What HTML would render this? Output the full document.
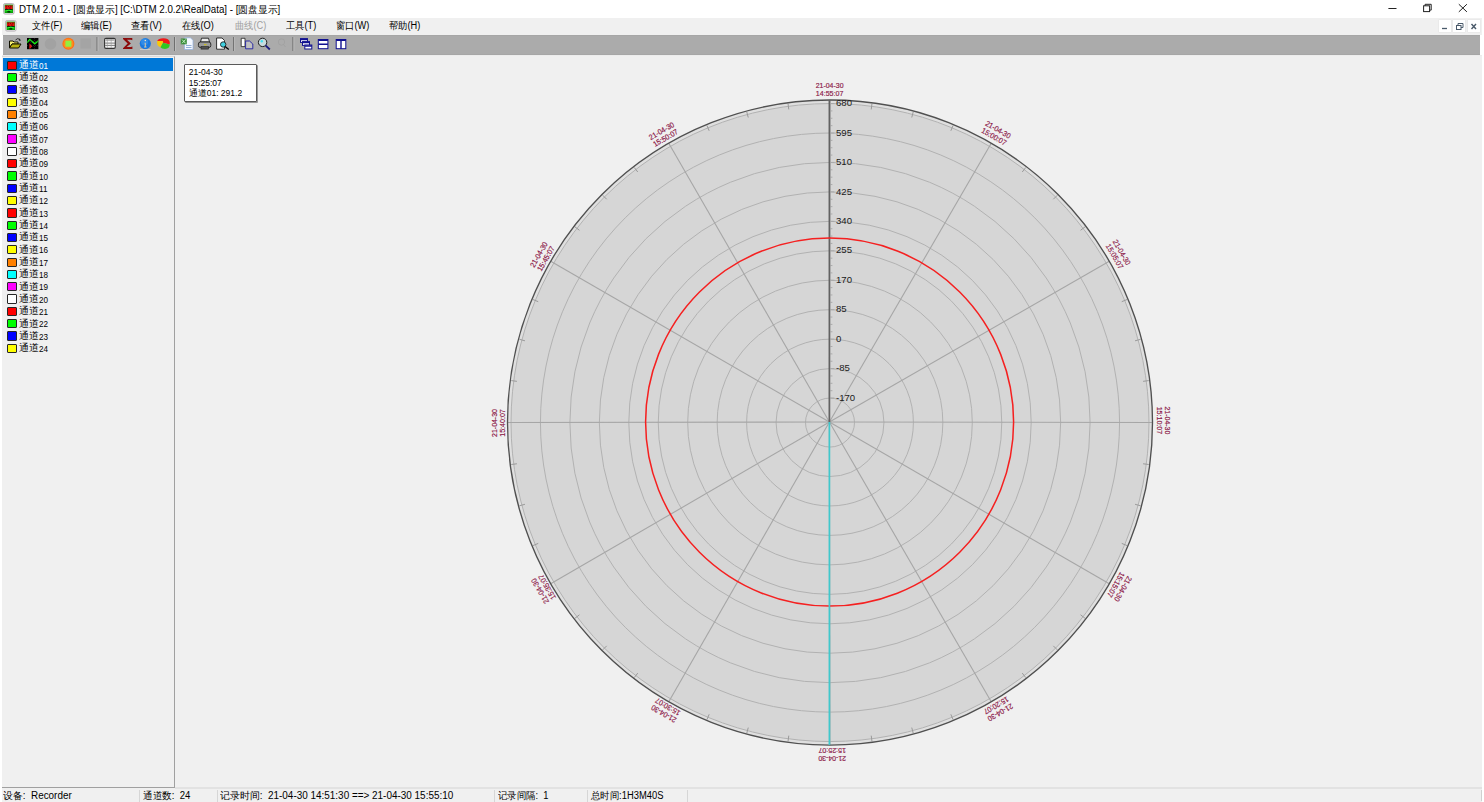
<!DOCTYPE html><html><head><meta charset="utf-8"><style>
html,body{margin:0;padding:0;width:1484px;height:802px;overflow:hidden;background:#fff;font-family:"Liberation Sans",sans-serif;}
.abs{position:absolute;}
.t{position:absolute;white-space:nowrap;line-height:1;color:#000;}
</style></head><body>

<div class="abs" style="left:2px;top:18px;width:1480px;height:17px;background:#f0f0f0"></div>
<div class="abs" style="left:3px;top:35px;width:1477px;height:20px;background:#ababab"></div>
<div class="abs" style="left:2px;top:55px;width:1480px;height:747px;background:#f0f0f0"></div>
<div class="abs" style="left:2px;top:55px;width:1480px;height:1px;background:#ececec"></div>
<div class="abs" style="left:3px;top:35px;width:1477px;height:1px;background:#a6a6a6"></div>
<div class="abs" style="left:3px;top:54px;width:1477px;height:1px;background:#a6a6a6"></div>
<div class="abs" style="left:2px;top:56px;width:172px;height:730px;border-top:1px solid #dadada;border-right:1px solid #a0a0a0;border-bottom:1px solid #a0a0a0;background:#f0f0f0"></div>
<div class="abs" style="left:175px;top:787px;width:1307px;height:2px;background:#e2e2e2"></div>
<svg class="abs" style="left:3px;top:3.3px" width="12" height="12" viewBox="0 0 12 12"><rect x="0.5" y="0.5" width="10.6" height="10.6" rx="1.6" fill="#e8e4e8" stroke="#b4aeb4" stroke-width="0.9"/><rect x="1.6" y="1.6" width="8.4" height="8.4" fill="#08a008"/><rect x="2" y="2.4" width="7.6" height="3.6" fill="#e81010"/><path d="M2.5 3.2 h1.5 M5 3.6 h1 M7 3.2 h1.6 M3 5.2 h1 M6 5 h2" stroke="#400000" stroke-width="0.6"/><rect x="2" y="6" width="7.6" height="0.9" fill="#102010"/><path d="M2.3 8 Q5.8 6.3 9.3 8" stroke="#40ff40" stroke-width="0.9" fill="none"/><rect x="4.5" y="8.4" width="2.6" height="1" fill="#000"/></svg>
<div class="t" style="left:19px;top:5px;font-size:10px;color:#000;transform:scaleX(0.975);transform-origin:0 0">DTM 2.0.1 - [圆盘显示] [C:\DTM 2.0.2\RealData] - [圆盘显示]</div>
<svg class="abs" style="left:1380px;top:0px" width="104" height="18" viewBox="0 0 104 18"><line x1="8.4" y1="8.5" x2="16.5" y2="8.5" stroke="#222" stroke-width="1"/><rect x="43.6" y="5.8" width="6" height="5.8" fill="none" stroke="#222" stroke-width="1"/><path d="M45.1 5.8 V4.3 H51.2 V10.1 H49.6" fill="none" stroke="#222" stroke-width="1"/><path d="M78.8 4.2 L86.9 11.9 M86.9 4.2 L78.8 11.9" stroke="#222" stroke-width="1"/></svg>
<svg class="abs" style="left:4.5px;top:19.6px" width="12" height="12" viewBox="0 0 12 12"><rect x="0.5" y="0.5" width="10.6" height="10.6" rx="1.6" fill="#e8e4e8" stroke="#b4aeb4" stroke-width="0.9"/><rect x="1.6" y="1.6" width="8.4" height="8.4" fill="#08a008"/><rect x="2" y="2.4" width="7.6" height="3.6" fill="#e81010"/><path d="M2.5 3.2 h1.5 M5 3.6 h1 M7 3.2 h1.6 M3 5.2 h1 M6 5 h2" stroke="#400000" stroke-width="0.6"/><rect x="2" y="6" width="7.6" height="0.9" fill="#102010"/><path d="M2.3 8 Q5.8 6.3 9.3 8" stroke="#40ff40" stroke-width="0.9" fill="none"/><rect x="4.5" y="8.4" width="2.6" height="1" fill="#000"/></svg>
<div class="t" style="left:31.7px;top:20.8px;font-size:10px;color:#000;transform:scaleX(0.925);transform-origin:0 0">文件(F)</div>
<div class="t" style="left:81px;top:20.8px;font-size:10px;color:#000;transform:scaleX(0.925);transform-origin:0 0">编辑(E)</div>
<div class="t" style="left:131px;top:20.8px;font-size:10px;color:#000;transform:scaleX(0.925);transform-origin:0 0">查看(V)</div>
<div class="t" style="left:182px;top:20.8px;font-size:10px;color:#000;transform:scaleX(0.925);transform-origin:0 0">在线(O)</div>
<div class="t" style="left:235px;top:20.8px;font-size:10px;color:#a0a0a0;transform:scaleX(0.925);transform-origin:0 0">曲线(C)</div>
<div class="t" style="left:285.5px;top:20.8px;font-size:10px;color:#000;transform:scaleX(0.925);transform-origin:0 0">工具(T)</div>
<div class="t" style="left:336px;top:20.8px;font-size:10px;color:#000;transform:scaleX(0.925);transform-origin:0 0">窗口(W)</div>
<div class="t" style="left:389px;top:20.8px;font-size:10px;color:#000;transform:scaleX(0.925);transform-origin:0 0">帮助(H)</div>
<div class="abs" style="left:1439px;top:20px;width:12px;height:12px;background:#fff;box-shadow:0 0 0 0.5px #e4e4e4"></div>
<div class="abs" style="left:1453px;top:20px;width:12px;height:12px;background:#fff;box-shadow:0 0 0 0.5px #e4e4e4"></div>
<div class="abs" style="left:1468px;top:20px;width:12px;height:12px;background:#fff;box-shadow:0 0 0 0.5px #e4e4e4"></div>
<svg class="abs" style="left:1439px;top:20px" width="42" height="13" viewBox="0 0 42 13"><line x1="3" y1="8.5" x2="8" y2="8.5" stroke="#4a5a6a" stroke-width="1.3"/><rect x="17.5" y="5.5" width="4.5" height="4" fill="none" stroke="#4a5a6a" stroke-width="1"/><path d="M19 5.5 V3.5 H24 V7.5 H22" fill="none" stroke="#4a5a6a" stroke-width="1"/><path d="M32.5 4 L37 9 M37 4 L32.5 9" stroke="#4a5a6a" stroke-width="1.4"/></svg>
<svg class="abs" style="left:0;top:0" width="360" height="56" viewBox="0 0 360 56"><line x1="97" y1="37" x2="97" y2="51" stroke="#6e6e6e" stroke-width="1"/><line x1="98" y1="37" x2="98" y2="51" stroke="#c8c8c8" stroke-width="0.6"/><line x1="174.5" y1="37" x2="174.5" y2="51" stroke="#6e6e6e" stroke-width="1"/><line x1="175.5" y1="37" x2="175.5" y2="51" stroke="#c8c8c8" stroke-width="0.6"/><line x1="233.6" y1="37" x2="233.6" y2="51" stroke="#6e6e6e" stroke-width="1"/><line x1="234.6" y1="37" x2="234.6" y2="51" stroke="#c8c8c8" stroke-width="0.6"/><line x1="292.9" y1="37" x2="292.9" y2="51" stroke="#6e6e6e" stroke-width="1"/><line x1="293.9" y1="37" x2="293.9" y2="51" stroke="#c8c8c8" stroke-width="0.6"/><path d="M9.5 41 H13 L14 42 H18 V44 H12 L9.5 48 Z" fill="#f8f070" stroke="#101000" stroke-width="1"/><path d="M9.5 48 L12 44 H21 L18.5 48 Z" fill="#b8b010" stroke="#101000" stroke-width="1"/><path d="M15.5 40 Q17.5 37.5 20 39.5" fill="none" stroke="#202020" stroke-width="0.9"/><path d="M19.5 38.5 L21 40.5 L18.8 40.8 Z" fill="#202020"/><rect x="27" y="38" width="11.4" height="11.2" fill="#000"/><path d="M27.2 42.5 L29.7 39.4 L34.8 43.8 L38.4 40.8" fill="none" stroke="#10f010" stroke-width="1.3"/><path d="M29.4 43.2 L32.4 46.2 L29.4 49 Z" fill="#ff1010"/><path d="M30.8 38 V49 M34.5 38 V49 M27 41.5 H38.4 M27 45.5 H38.4" stroke="#404040" stroke-width="0.5" stroke-dasharray="1 1"/><circle cx="50.5" cy="44" r="5.8" fill="#a2a2a2"/><circle cx="68.4" cy="43.7" r="6" fill="#ff7010"/><circle cx="68.4" cy="43.7" r="5" fill="#ff8a20"/><rect x="65.4" y="40.7" width="6" height="6" fill="#90f040"/><rect x="80.5" y="38.5" width="10.5" height="10" fill="#a4a4a4"/><rect x="104.6" y="38.4" width="10.7" height="10" rx="1.3" fill="#f8f8f8" stroke="#343434" stroke-width="1.1"/><rect x="105.3" y="39" width="9.3" height="2" fill="#b8b8b8"/><path d="M105.2 43.1 H115 M105.2 45.4 H115" stroke="#505050" stroke-width="0.75"/><path d="M107.3 39 V48 M111.2 39 V48" stroke="#9a9a9a" stroke-width="0.6"/><path d="M123 38 H132.3 V40.3 L131 39.8 H127 L130.9 43.6 L126.6 47.1 H131 L132.4 46.4 V49 H123 V48.2 L127.7 43.6 L123 38.9 Z" fill="#8c0a0a"/><circle cx="145.3" cy="43.6" r="5.6" fill="#1878e0"/><circle cx="144.5" cy="42" r="3.5" fill="#4aa0f0" opacity="0.5"/><circle cx="145.3" cy="40.5" r="0.75" fill="#f0e8d0"/><path d="M144.5 42.8 H145.8 V46.6 H146.5 V47.4 H144.1 V46.6 H144.8 V43.5 H144.5 Z" fill="#d8c8a8"/><line x1="140" y1="49.5" x2="150.5" y2="49.5" stroke="#e0e0e0" stroke-width="0.6"/><path d="M157.2 41 Q158.5 38.3 163.2 38.2 Q169.3 38.3 169.8 42 L169.7 44.5 L163 42.8 L162.8 41 Z" fill="#f01818"/><path d="M157.2 41 H162.8 L163 42.8 L160.5 47.3 Q157.3 46.2 157.1 43 Z" fill="#f8c808"/><path d="M163 42.8 L169.7 44.5 Q169.8 48.6 165 49 Q161.6 49 160.5 47.3 Z" fill="#30c820"/><path d="M184.5 37.8 H190.5 L193 40.3 V49.5 H184.5 Z" fill="#f4f8ff" stroke="#90b0e0" stroke-width="0.7"/><rect x="180.8" y="38.5" width="6" height="5.8" fill="#3a8a3a"/><path d="M182 39.5 L185.6 43.3 M185.6 39.5 L182 43.3" stroke="#d0ffd0" stroke-width="0.9"/><path d="M186 45.5 H191.5 M186 47.5 H191.5" stroke="#5080c0" stroke-width="0.6"/><path d="M200.5 42 L201.5 38.2 H208.5 L209.5 42 Z" fill="#e8e8e8" stroke="#202020" stroke-width="0.9"/><rect x="198.4" y="42" width="12.4" height="5.5" rx="2" fill="#9a9a9a" stroke="#202020" stroke-width="0.9"/><rect x="201" y="46.5" width="7.5" height="2.6" fill="#505050" stroke="#202020" stroke-width="0.6"/><rect x="204" y="44.2" width="2.5" height="1" fill="#d0c000"/><path d="M216.6 38 H222 L224.5 40.5 V49.2 H216.6 Z" fill="#fff" stroke="#202020" stroke-width="0.9"/><circle cx="223.2" cy="44.5" r="2.7" fill="#40d0e0" stroke="#202020" stroke-width="0.9"/><path d="M225 46.5 L228.8 49.5" stroke="#000" stroke-width="1.3"/><path d="M241.2 38.3 H245 V46.6 H241.2 Z" fill="#fff" stroke="#202020" stroke-width="0.8"/><path d="M245.6 41 H249.5 L252.8 44 V48.8 H245.6 Z" fill="#c0c0c0" stroke="#2020a0" stroke-width="0.9"/><circle cx="262.6" cy="42.4" r="4.2" fill="#c8dce0" stroke="#202020" stroke-width="1"/><circle cx="261.8" cy="41.3" r="1.2" fill="#40e0f0"/><path d="M265.5 45.4 L269.8 49.5" stroke="#1a1a80" stroke-width="1.8"/><circle cx="281.5" cy="42" r="3.2" fill="none" stroke="#a0a0a0" stroke-width="0.8"/><path d="M283.5 44.5 L285.5 47" stroke="#a0a0a0" stroke-width="0.8"/><rect x="300.5" y="38.6" width="7" height="3.8" fill="#fff" stroke="#101090" stroke-width="1"/><rect x="302.5" y="41.6" width="7" height="3.8" fill="#fff" stroke="#101090" stroke-width="1"/><rect x="304.8" y="45" width="7" height="4" fill="#fff" stroke="#101090" stroke-width="1"/><path d="M300.5 39.5 H307.5 M302.5 42.5 H309.5 M304.8 46 H311.8" stroke="#101090" stroke-width="1.4"/><rect x="318.3" y="39.5" width="9.6" height="9.2" fill="#fff" stroke="#101090" stroke-width="1"/><path d="M318.3 40.3 H327.9 M318.3 44.2 H327.9" stroke="#101090" stroke-width="1.6"/><rect x="336.2" y="39.5" width="9.6" height="9.2" fill="#fff" stroke="#101090" stroke-width="1"/><path d="M336.2 40.3 H345.8 M341 39.5 V48.7" stroke="#101090" stroke-width="1.4"/></svg>
<div class="abs" style="left:3px;top:58px;width:170px;height:12.5px;background:#0078d7"></div>
<div class="abs" style="left:7.2px;top:60.60px;width:7.6px;height:7.2px;border:1px solid #262626;border-radius:1px;background:#ff0000"></div>
<div class="t" style="left:19.0px;top:60.00px;font-size:9.9px;color:#fff">通道</div>
<div class="t" style="left:38.8px;top:60.80px;font-size:9.9px;color:#fff;transform:scaleX(0.82);transform-origin:0 0">01</div>
<div class="abs" style="left:7.2px;top:72.91px;width:7.6px;height:7.2px;border:1px solid #262626;border-radius:1px;background:#00ff00"></div>
<div class="t" style="left:19.0px;top:72.31px;font-size:9.9px;color:#000">通道</div>
<div class="t" style="left:38.8px;top:73.11px;font-size:9.9px;color:#000;transform:scaleX(0.82);transform-origin:0 0">02</div>
<div class="abs" style="left:7.2px;top:85.22px;width:7.6px;height:7.2px;border:1px solid #262626;border-radius:1px;background:#0000ff"></div>
<div class="t" style="left:19.0px;top:84.62px;font-size:9.9px;color:#000">通道</div>
<div class="t" style="left:38.8px;top:85.42px;font-size:9.9px;color:#000;transform:scaleX(0.82);transform-origin:0 0">03</div>
<div class="abs" style="left:7.2px;top:97.53px;width:7.6px;height:7.2px;border:1px solid #262626;border-radius:1px;background:#ffff00"></div>
<div class="t" style="left:19.0px;top:96.93px;font-size:9.9px;color:#000">通道</div>
<div class="t" style="left:38.8px;top:97.73px;font-size:9.9px;color:#000;transform:scaleX(0.82);transform-origin:0 0">04</div>
<div class="abs" style="left:7.2px;top:109.84px;width:7.6px;height:7.2px;border:1px solid #262626;border-radius:1px;background:#ff8000"></div>
<div class="t" style="left:19.0px;top:109.24px;font-size:9.9px;color:#000">通道</div>
<div class="t" style="left:38.8px;top:110.04px;font-size:9.9px;color:#000;transform:scaleX(0.82);transform-origin:0 0">05</div>
<div class="abs" style="left:7.2px;top:122.15px;width:7.6px;height:7.2px;border:1px solid #262626;border-radius:1px;background:#00ffff"></div>
<div class="t" style="left:19.0px;top:121.55px;font-size:9.9px;color:#000">通道</div>
<div class="t" style="left:38.8px;top:122.35px;font-size:9.9px;color:#000;transform:scaleX(0.82);transform-origin:0 0">06</div>
<div class="abs" style="left:7.2px;top:134.46px;width:7.6px;height:7.2px;border:1px solid #262626;border-radius:1px;background:#ff00ff"></div>
<div class="t" style="left:19.0px;top:133.86px;font-size:9.9px;color:#000">通道</div>
<div class="t" style="left:38.8px;top:134.66px;font-size:9.9px;color:#000;transform:scaleX(0.82);transform-origin:0 0">07</div>
<div class="abs" style="left:7.2px;top:146.77px;width:7.6px;height:7.2px;border:1px solid #262626;border-radius:1px;background:#ffffff"></div>
<div class="t" style="left:19.0px;top:146.17px;font-size:9.9px;color:#000">通道</div>
<div class="t" style="left:38.8px;top:146.97px;font-size:9.9px;color:#000;transform:scaleX(0.82);transform-origin:0 0">08</div>
<div class="abs" style="left:7.2px;top:159.08px;width:7.6px;height:7.2px;border:1px solid #262626;border-radius:1px;background:#ff0000"></div>
<div class="t" style="left:19.0px;top:158.48px;font-size:9.9px;color:#000">通道</div>
<div class="t" style="left:38.8px;top:159.28px;font-size:9.9px;color:#000;transform:scaleX(0.82);transform-origin:0 0">09</div>
<div class="abs" style="left:7.2px;top:171.39px;width:7.6px;height:7.2px;border:1px solid #262626;border-radius:1px;background:#00ff00"></div>
<div class="t" style="left:19.0px;top:170.79px;font-size:9.9px;color:#000">通道</div>
<div class="t" style="left:38.8px;top:171.59px;font-size:9.9px;color:#000;transform:scaleX(0.82);transform-origin:0 0">10</div>
<div class="abs" style="left:7.2px;top:183.70px;width:7.6px;height:7.2px;border:1px solid #262626;border-radius:1px;background:#0000ff"></div>
<div class="t" style="left:19.0px;top:183.10px;font-size:9.9px;color:#000">通道</div>
<div class="t" style="left:38.8px;top:183.90px;font-size:9.9px;color:#000;transform:scaleX(0.82);transform-origin:0 0">11</div>
<div class="abs" style="left:7.2px;top:196.01px;width:7.6px;height:7.2px;border:1px solid #262626;border-radius:1px;background:#ffff00"></div>
<div class="t" style="left:19.0px;top:195.41px;font-size:9.9px;color:#000">通道</div>
<div class="t" style="left:38.8px;top:196.21px;font-size:9.9px;color:#000;transform:scaleX(0.82);transform-origin:0 0">12</div>
<div class="abs" style="left:7.2px;top:208.32px;width:7.6px;height:7.2px;border:1px solid #262626;border-radius:1px;background:#ff0000"></div>
<div class="t" style="left:19.0px;top:207.72px;font-size:9.9px;color:#000">通道</div>
<div class="t" style="left:38.8px;top:208.52px;font-size:9.9px;color:#000;transform:scaleX(0.82);transform-origin:0 0">13</div>
<div class="abs" style="left:7.2px;top:220.63px;width:7.6px;height:7.2px;border:1px solid #262626;border-radius:1px;background:#00ff00"></div>
<div class="t" style="left:19.0px;top:220.03px;font-size:9.9px;color:#000">通道</div>
<div class="t" style="left:38.8px;top:220.83px;font-size:9.9px;color:#000;transform:scaleX(0.82);transform-origin:0 0">14</div>
<div class="abs" style="left:7.2px;top:232.94px;width:7.6px;height:7.2px;border:1px solid #262626;border-radius:1px;background:#0000ff"></div>
<div class="t" style="left:19.0px;top:232.34px;font-size:9.9px;color:#000">通道</div>
<div class="t" style="left:38.8px;top:233.14px;font-size:9.9px;color:#000;transform:scaleX(0.82);transform-origin:0 0">15</div>
<div class="abs" style="left:7.2px;top:245.25px;width:7.6px;height:7.2px;border:1px solid #262626;border-radius:1px;background:#ffff00"></div>
<div class="t" style="left:19.0px;top:244.65px;font-size:9.9px;color:#000">通道</div>
<div class="t" style="left:38.8px;top:245.45px;font-size:9.9px;color:#000;transform:scaleX(0.82);transform-origin:0 0">16</div>
<div class="abs" style="left:7.2px;top:257.56px;width:7.6px;height:7.2px;border:1px solid #262626;border-radius:1px;background:#ff8000"></div>
<div class="t" style="left:19.0px;top:256.96px;font-size:9.9px;color:#000">通道</div>
<div class="t" style="left:38.8px;top:257.76px;font-size:9.9px;color:#000;transform:scaleX(0.82);transform-origin:0 0">17</div>
<div class="abs" style="left:7.2px;top:269.87px;width:7.6px;height:7.2px;border:1px solid #262626;border-radius:1px;background:#00ffff"></div>
<div class="t" style="left:19.0px;top:269.27px;font-size:9.9px;color:#000">通道</div>
<div class="t" style="left:38.8px;top:270.07px;font-size:9.9px;color:#000;transform:scaleX(0.82);transform-origin:0 0">18</div>
<div class="abs" style="left:7.2px;top:282.18px;width:7.6px;height:7.2px;border:1px solid #262626;border-radius:1px;background:#ff00ff"></div>
<div class="t" style="left:19.0px;top:281.58px;font-size:9.9px;color:#000">通道</div>
<div class="t" style="left:38.8px;top:282.38px;font-size:9.9px;color:#000;transform:scaleX(0.82);transform-origin:0 0">19</div>
<div class="abs" style="left:7.2px;top:294.49px;width:7.6px;height:7.2px;border:1px solid #262626;border-radius:1px;background:#ffffff"></div>
<div class="t" style="left:19.0px;top:293.89px;font-size:9.9px;color:#000">通道</div>
<div class="t" style="left:38.8px;top:294.69px;font-size:9.9px;color:#000;transform:scaleX(0.82);transform-origin:0 0">20</div>
<div class="abs" style="left:7.2px;top:306.80px;width:7.6px;height:7.2px;border:1px solid #262626;border-radius:1px;background:#ff0000"></div>
<div class="t" style="left:19.0px;top:306.20px;font-size:9.9px;color:#000">通道</div>
<div class="t" style="left:38.8px;top:307.00px;font-size:9.9px;color:#000;transform:scaleX(0.82);transform-origin:0 0">21</div>
<div class="abs" style="left:7.2px;top:319.11px;width:7.6px;height:7.2px;border:1px solid #262626;border-radius:1px;background:#00ff00"></div>
<div class="t" style="left:19.0px;top:318.51px;font-size:9.9px;color:#000">通道</div>
<div class="t" style="left:38.8px;top:319.31px;font-size:9.9px;color:#000;transform:scaleX(0.82);transform-origin:0 0">22</div>
<div class="abs" style="left:7.2px;top:331.42px;width:7.6px;height:7.2px;border:1px solid #262626;border-radius:1px;background:#0000ff"></div>
<div class="t" style="left:19.0px;top:330.82px;font-size:9.9px;color:#000">通道</div>
<div class="t" style="left:38.8px;top:331.62px;font-size:9.9px;color:#000;transform:scaleX(0.82);transform-origin:0 0">23</div>
<div class="abs" style="left:7.2px;top:343.73px;width:7.6px;height:7.2px;border:1px solid #262626;border-radius:1px;background:#ffff00"></div>
<div class="t" style="left:19.0px;top:343.13px;font-size:9.9px;color:#000">通道</div>
<div class="t" style="left:38.8px;top:343.93px;font-size:9.9px;color:#000;transform:scaleX(0.82);transform-origin:0 0">24</div>
<div class="abs" style="left:139px;top:790px;width:1px;height:12px;background:#d6d6d6"></div>
<div class="abs" style="left:216.5px;top:790px;width:1px;height:12px;background:#d6d6d6"></div>
<div class="abs" style="left:494px;top:790px;width:1px;height:12px;background:#d6d6d6"></div>
<div class="abs" style="left:587px;top:790px;width:1px;height:12px;background:#d6d6d6"></div>
<div class="abs" style="left:687px;top:790px;width:1px;height:12px;background:#d6d6d6"></div>
<div class="abs" style="left:1481px;top:790px;width:1px;height:11px;background:#d0d0d0"></div>
<div class="t" style="left:3px;top:791px;font-size:10px;color:#000;transform:scaleX(0.989);transform-origin:0 0">设备:&nbsp;&nbsp;Recorder</div>
<div class="t" style="left:142.8px;top:791px;font-size:10px;color:#000;transform:scaleX(0.958);transform-origin:0 0">通道数:&nbsp;&nbsp;24</div>
<div class="t" style="left:220.4px;top:791px;font-size:10px;color:#000;transform:scaleX(0.993);transform-origin:0 0">记录时间:&nbsp;&nbsp;21-04-30 14:51:30 ==> 21-04-30 15:55:10</div>
<div class="t" style="left:498px;top:791px;font-size:10px;color:#000;transform:scaleX(0.935);transform-origin:0 0">记录间隔:&nbsp;&nbsp;1</div>
<div class="t" style="left:590.5px;top:791px;font-size:10px;color:#000;transform:scaleX(0.937);transform-origin:0 0">总时间:1H3M40S</div>
<svg class="abs" style="left:0;top:0" width="1484" height="802" viewBox="0 0 1484 802" font-family="Liberation Sans, sans-serif"><circle cx="830.0" cy="422.55" r="322.5" fill="#d6d6d6"/><circle cx="830.0" cy="422.55" r="320.7" fill="none" stroke="#dfdfdf" stroke-width="3.6"/><circle cx="830.0" cy="422.55" r="24.50" fill="none" stroke="#b2b2b2" stroke-width="1"/><circle cx="830.0" cy="422.55" r="53.95" fill="none" stroke="#b2b2b2" stroke-width="1"/><circle cx="830.0" cy="422.55" r="83.40" fill="none" stroke="#b2b2b2" stroke-width="1"/><circle cx="830.0" cy="422.55" r="112.85" fill="none" stroke="#b2b2b2" stroke-width="1"/><circle cx="830.0" cy="422.55" r="142.30" fill="none" stroke="#b2b2b2" stroke-width="1"/><circle cx="830.0" cy="422.55" r="171.75" fill="none" stroke="#b2b2b2" stroke-width="1"/><circle cx="830.0" cy="422.55" r="201.20" fill="none" stroke="#b2b2b2" stroke-width="1"/><circle cx="830.0" cy="422.55" r="230.65" fill="none" stroke="#b2b2b2" stroke-width="1"/><circle cx="830.0" cy="422.55" r="260.10" fill="none" stroke="#b2b2b2" stroke-width="1"/><circle cx="830.0" cy="422.55" r="289.55" fill="none" stroke="#b2b2b2" stroke-width="1"/><circle cx="830.0" cy="422.55" r="319.00" fill="none" stroke="#b2b2b2" stroke-width="1"/><line x1="829.4" y1="422.0" x2="830.00" y2="100.05" stroke="#a6a6a6" stroke-width="1.1"/><line x1="829.4" y1="422.0" x2="991.25" y2="143.26" stroke="#a6a6a6" stroke-width="1.1"/><line x1="829.4" y1="422.0" x2="1109.29" y2="261.30" stroke="#a6a6a6" stroke-width="1.1"/><line x1="829.4" y1="422.0" x2="1152.50" y2="422.55" stroke="#a6a6a6" stroke-width="1.1"/><line x1="829.4" y1="422.0" x2="1109.29" y2="583.80" stroke="#a6a6a6" stroke-width="1.1"/><line x1="829.4" y1="422.0" x2="991.25" y2="701.84" stroke="#a6a6a6" stroke-width="1.1"/><line x1="829.4" y1="422.0" x2="830.00" y2="745.05" stroke="#a6a6a6" stroke-width="1.1"/><line x1="829.4" y1="422.0" x2="668.75" y2="701.84" stroke="#a6a6a6" stroke-width="1.1"/><line x1="829.4" y1="422.0" x2="550.71" y2="583.80" stroke="#a6a6a6" stroke-width="1.1"/><line x1="829.4" y1="422.0" x2="507.50" y2="422.55" stroke="#a6a6a6" stroke-width="1.1"/><line x1="829.4" y1="422.0" x2="550.71" y2="261.30" stroke="#a6a6a6" stroke-width="1.1"/><line x1="829.4" y1="422.0" x2="668.75" y2="143.26" stroke="#a6a6a6" stroke-width="1.1"/><line x1="871.22" y1="109.45" x2="871.96" y2="103.80" stroke="#9a9a9a" stroke-width="1"/><line x1="911.74" y1="117.51" x2="913.21" y2="112.00" stroke="#9a9a9a" stroke-width="1"/><line x1="950.85" y1="130.79" x2="953.03" y2="125.52" stroke="#9a9a9a" stroke-width="1"/><line x1="1022.25" y1="172.01" x2="1025.72" y2="167.49" stroke="#9a9a9a" stroke-width="1"/><line x1="1053.30" y1="199.25" x2="1057.33" y2="195.22" stroke="#9a9a9a" stroke-width="1"/><line x1="1080.54" y1="230.30" x2="1085.06" y2="226.83" stroke="#9a9a9a" stroke-width="1"/><line x1="1121.76" y1="301.70" x2="1127.03" y2="299.52" stroke="#9a9a9a" stroke-width="1"/><line x1="1135.04" y1="340.81" x2="1140.55" y2="339.34" stroke="#9a9a9a" stroke-width="1"/><line x1="1143.10" y1="381.33" x2="1148.75" y2="380.59" stroke="#9a9a9a" stroke-width="1"/><line x1="1143.10" y1="463.77" x2="1148.75" y2="464.51" stroke="#9a9a9a" stroke-width="1"/><line x1="1135.04" y1="504.29" x2="1140.55" y2="505.76" stroke="#9a9a9a" stroke-width="1"/><line x1="1121.76" y1="543.40" x2="1127.03" y2="545.58" stroke="#9a9a9a" stroke-width="1"/><line x1="1080.54" y1="614.80" x2="1085.06" y2="618.27" stroke="#9a9a9a" stroke-width="1"/><line x1="1053.30" y1="645.85" x2="1057.33" y2="649.88" stroke="#9a9a9a" stroke-width="1"/><line x1="1022.25" y1="673.09" x2="1025.72" y2="677.61" stroke="#9a9a9a" stroke-width="1"/><line x1="950.85" y1="714.31" x2="953.03" y2="719.58" stroke="#9a9a9a" stroke-width="1"/><line x1="911.74" y1="727.59" x2="913.21" y2="733.10" stroke="#9a9a9a" stroke-width="1"/><line x1="871.22" y1="735.65" x2="871.96" y2="741.30" stroke="#9a9a9a" stroke-width="1"/><line x1="788.78" y1="735.65" x2="788.04" y2="741.30" stroke="#9a9a9a" stroke-width="1"/><line x1="748.26" y1="727.59" x2="746.79" y2="733.10" stroke="#9a9a9a" stroke-width="1"/><line x1="709.15" y1="714.31" x2="706.97" y2="719.58" stroke="#9a9a9a" stroke-width="1"/><line x1="637.75" y1="673.09" x2="634.28" y2="677.61" stroke="#9a9a9a" stroke-width="1"/><line x1="606.70" y1="645.85" x2="602.67" y2="649.88" stroke="#9a9a9a" stroke-width="1"/><line x1="579.46" y1="614.80" x2="574.94" y2="618.27" stroke="#9a9a9a" stroke-width="1"/><line x1="538.24" y1="543.40" x2="532.97" y2="545.58" stroke="#9a9a9a" stroke-width="1"/><line x1="524.96" y1="504.29" x2="519.45" y2="505.76" stroke="#9a9a9a" stroke-width="1"/><line x1="516.90" y1="463.77" x2="511.25" y2="464.51" stroke="#9a9a9a" stroke-width="1"/><line x1="516.90" y1="381.33" x2="511.25" y2="380.59" stroke="#9a9a9a" stroke-width="1"/><line x1="524.96" y1="340.81" x2="519.45" y2="339.34" stroke="#9a9a9a" stroke-width="1"/><line x1="538.24" y1="301.70" x2="532.97" y2="299.52" stroke="#9a9a9a" stroke-width="1"/><line x1="579.46" y1="230.30" x2="574.94" y2="226.83" stroke="#9a9a9a" stroke-width="1"/><line x1="606.70" y1="199.25" x2="602.67" y2="195.22" stroke="#9a9a9a" stroke-width="1"/><line x1="637.75" y1="172.01" x2="634.28" y2="167.49" stroke="#9a9a9a" stroke-width="1"/><line x1="709.15" y1="130.79" x2="706.97" y2="125.52" stroke="#9a9a9a" stroke-width="1"/><line x1="748.26" y1="117.51" x2="746.79" y2="112.00" stroke="#9a9a9a" stroke-width="1"/><line x1="788.78" y1="109.45" x2="788.04" y2="103.80" stroke="#9a9a9a" stroke-width="1"/><circle cx="830.0" cy="422.55" r="322.5" fill="none" stroke="#505050" stroke-width="1.35"/><line x1="829.4" y1="422.0" x2="829.4" y2="100.05000000000001" stroke="#626262" stroke-width="1.7"/><line x1="830.1999999999999" y1="398.05" x2="834.4" y2="398.05" stroke="#a8a8a8" stroke-width="1"/><line x1="830.1999999999999" y1="390.69" x2="832.4" y2="390.69" stroke="#a0a0a0" stroke-width="0.8"/><line x1="830.1999999999999" y1="383.32" x2="832.4" y2="383.32" stroke="#a0a0a0" stroke-width="0.8"/><line x1="830.1999999999999" y1="375.96" x2="832.4" y2="375.96" stroke="#a0a0a0" stroke-width="0.8"/><line x1="830.1999999999999" y1="368.60" x2="834.4" y2="368.60" stroke="#a8a8a8" stroke-width="1"/><line x1="830.1999999999999" y1="361.24" x2="832.4" y2="361.24" stroke="#a0a0a0" stroke-width="0.8"/><line x1="830.1999999999999" y1="353.88" x2="832.4" y2="353.88" stroke="#a0a0a0" stroke-width="0.8"/><line x1="830.1999999999999" y1="346.51" x2="832.4" y2="346.51" stroke="#a0a0a0" stroke-width="0.8"/><line x1="830.1999999999999" y1="339.15" x2="834.4" y2="339.15" stroke="#a8a8a8" stroke-width="1"/><line x1="830.1999999999999" y1="331.79" x2="832.4" y2="331.79" stroke="#a0a0a0" stroke-width="0.8"/><line x1="830.1999999999999" y1="324.42" x2="832.4" y2="324.42" stroke="#a0a0a0" stroke-width="0.8"/><line x1="830.1999999999999" y1="317.06" x2="832.4" y2="317.06" stroke="#a0a0a0" stroke-width="0.8"/><line x1="830.1999999999999" y1="309.70" x2="834.4" y2="309.70" stroke="#a8a8a8" stroke-width="1"/><line x1="830.1999999999999" y1="302.34" x2="832.4" y2="302.34" stroke="#a0a0a0" stroke-width="0.8"/><line x1="830.1999999999999" y1="294.98" x2="832.4" y2="294.98" stroke="#a0a0a0" stroke-width="0.8"/><line x1="830.1999999999999" y1="287.61" x2="832.4" y2="287.61" stroke="#a0a0a0" stroke-width="0.8"/><line x1="830.1999999999999" y1="280.25" x2="834.4" y2="280.25" stroke="#a8a8a8" stroke-width="1"/><line x1="830.1999999999999" y1="272.89" x2="832.4" y2="272.89" stroke="#a0a0a0" stroke-width="0.8"/><line x1="830.1999999999999" y1="265.52" x2="832.4" y2="265.52" stroke="#a0a0a0" stroke-width="0.8"/><line x1="830.1999999999999" y1="258.16" x2="832.4" y2="258.16" stroke="#a0a0a0" stroke-width="0.8"/><line x1="830.1999999999999" y1="250.80" x2="834.4" y2="250.80" stroke="#a8a8a8" stroke-width="1"/><line x1="830.1999999999999" y1="243.44" x2="832.4" y2="243.44" stroke="#a0a0a0" stroke-width="0.8"/><line x1="830.1999999999999" y1="236.08" x2="832.4" y2="236.08" stroke="#a0a0a0" stroke-width="0.8"/><line x1="830.1999999999999" y1="228.71" x2="832.4" y2="228.71" stroke="#a0a0a0" stroke-width="0.8"/><line x1="830.1999999999999" y1="221.35" x2="834.4" y2="221.35" stroke="#a8a8a8" stroke-width="1"/><line x1="830.1999999999999" y1="213.99" x2="832.4" y2="213.99" stroke="#a0a0a0" stroke-width="0.8"/><line x1="830.1999999999999" y1="206.63" x2="832.4" y2="206.63" stroke="#a0a0a0" stroke-width="0.8"/><line x1="830.1999999999999" y1="199.26" x2="832.4" y2="199.26" stroke="#a0a0a0" stroke-width="0.8"/><line x1="830.1999999999999" y1="191.90" x2="834.4" y2="191.90" stroke="#a8a8a8" stroke-width="1"/><line x1="830.1999999999999" y1="184.54" x2="832.4" y2="184.54" stroke="#a0a0a0" stroke-width="0.8"/><line x1="830.1999999999999" y1="177.18" x2="832.4" y2="177.18" stroke="#a0a0a0" stroke-width="0.8"/><line x1="830.1999999999999" y1="169.81" x2="832.4" y2="169.81" stroke="#a0a0a0" stroke-width="0.8"/><line x1="830.1999999999999" y1="162.45" x2="834.4" y2="162.45" stroke="#a8a8a8" stroke-width="1"/><line x1="830.1999999999999" y1="155.09" x2="832.4" y2="155.09" stroke="#a0a0a0" stroke-width="0.8"/><line x1="830.1999999999999" y1="147.72" x2="832.4" y2="147.72" stroke="#a0a0a0" stroke-width="0.8"/><line x1="830.1999999999999" y1="140.36" x2="832.4" y2="140.36" stroke="#a0a0a0" stroke-width="0.8"/><line x1="830.1999999999999" y1="133.00" x2="834.4" y2="133.00" stroke="#a8a8a8" stroke-width="1"/><line x1="830.1999999999999" y1="125.64" x2="832.4" y2="125.64" stroke="#a0a0a0" stroke-width="0.8"/><line x1="830.1999999999999" y1="118.28" x2="832.4" y2="118.28" stroke="#a0a0a0" stroke-width="0.8"/><line x1="830.1999999999999" y1="110.91" x2="832.4" y2="110.91" stroke="#a0a0a0" stroke-width="0.8"/><line x1="830.1999999999999" y1="103.55" x2="834.4" y2="103.55" stroke="#a8a8a8" stroke-width="1"/><circle cx="829.6" cy="422.1" r="184" fill="none" stroke="#f52020" stroke-width="1.5"/><line x1="829.4" y1="422.0" x2="829.4" y2="745.05" stroke="#40c8cc" stroke-width="1.7"/><text x="836" y="106.15" font-size="9.6" fill="#1a1a1a">680</text><text x="836" y="135.60" font-size="9.6" fill="#1a1a1a">595</text><text x="836" y="165.05" font-size="9.6" fill="#1a1a1a">510</text><text x="836" y="194.50" font-size="9.6" fill="#1a1a1a">425</text><text x="836" y="223.95" font-size="9.6" fill="#1a1a1a">340</text><text x="836" y="253.40" font-size="9.6" fill="#1a1a1a">255</text><text x="836" y="282.85" font-size="9.6" fill="#1a1a1a">170</text><text x="836" y="312.30" font-size="9.6" fill="#1a1a1a">85</text><text x="836" y="341.75" font-size="9.6" fill="#1a1a1a">0</text><text x="836" y="371.20" font-size="9.6" fill="#1a1a1a">-85</text><text x="836" y="400.65" font-size="9.6" fill="#1a1a1a">-170</text><g transform="translate(830.9,421.7) rotate(0) translate(-1.3,-332.9)"><text x="-13.9" y="-1.0" font-size="7.6" textLength="27.8" lengthAdjust="spacingAndGlyphs" fill="#8c1848" stroke="#8c1848" stroke-width="0.18">21-04-30</text><text x="-13.75" y="7.1" font-size="7.6" textLength="27.5" lengthAdjust="spacingAndGlyphs" fill="#8c1848" stroke="#8c1848" stroke-width="0.18">14:55:07</text></g><g transform="translate(830.9,421.7) rotate(30) translate(-1.3,-332.9)"><text x="-13.9" y="-1.0" font-size="7.6" textLength="27.8" lengthAdjust="spacingAndGlyphs" fill="#8c1848" stroke="#8c1848" stroke-width="0.18">21-04-30</text><text x="-13.75" y="7.1" font-size="7.6" textLength="27.5" lengthAdjust="spacingAndGlyphs" fill="#8c1848" stroke="#8c1848" stroke-width="0.18">15:00:07</text></g><g transform="translate(830.9,421.7) rotate(60) translate(-1.3,-332.9)"><text x="-13.9" y="-1.0" font-size="7.6" textLength="27.8" lengthAdjust="spacingAndGlyphs" fill="#8c1848" stroke="#8c1848" stroke-width="0.18">21-04-30</text><text x="-13.75" y="7.1" font-size="7.6" textLength="27.5" lengthAdjust="spacingAndGlyphs" fill="#8c1848" stroke="#8c1848" stroke-width="0.18">15:05:07</text></g><g transform="translate(830.9,421.7) rotate(90) translate(-1.3,-332.9)"><text x="-13.9" y="-1.0" font-size="7.6" textLength="27.8" lengthAdjust="spacingAndGlyphs" fill="#8c1848" stroke="#8c1848" stroke-width="0.18">21-04-30</text><text x="-13.75" y="7.1" font-size="7.6" textLength="27.5" lengthAdjust="spacingAndGlyphs" fill="#8c1848" stroke="#8c1848" stroke-width="0.18">15:10:07</text></g><g transform="translate(830.9,421.7) rotate(120) translate(-1.3,-332.9)"><text x="-13.9" y="-1.0" font-size="7.6" textLength="27.8" lengthAdjust="spacingAndGlyphs" fill="#8c1848" stroke="#8c1848" stroke-width="0.18">21-04-30</text><text x="-13.75" y="7.1" font-size="7.6" textLength="27.5" lengthAdjust="spacingAndGlyphs" fill="#8c1848" stroke="#8c1848" stroke-width="0.18">15:15:07</text></g><g transform="translate(830.9,421.7) rotate(150) translate(-1.3,-332.9)"><text x="-13.9" y="-1.0" font-size="7.6" textLength="27.8" lengthAdjust="spacingAndGlyphs" fill="#8c1848" stroke="#8c1848" stroke-width="0.18">21-04-30</text><text x="-13.75" y="7.1" font-size="7.6" textLength="27.5" lengthAdjust="spacingAndGlyphs" fill="#8c1848" stroke="#8c1848" stroke-width="0.18">15:20:07</text></g><g transform="translate(830.9,421.7) rotate(180) translate(-1.3,-332.9)"><text x="-13.9" y="-1.0" font-size="7.6" textLength="27.8" lengthAdjust="spacingAndGlyphs" fill="#8c1848" stroke="#8c1848" stroke-width="0.18">21-04-30</text><text x="-13.75" y="7.1" font-size="7.6" textLength="27.5" lengthAdjust="spacingAndGlyphs" fill="#8c1848" stroke="#8c1848" stroke-width="0.18">15:25:07</text></g><g transform="translate(830.9,421.7) rotate(210) translate(-1.3,-332.9)"><text x="-13.9" y="-1.0" font-size="7.6" textLength="27.8" lengthAdjust="spacingAndGlyphs" fill="#8c1848" stroke="#8c1848" stroke-width="0.18">21-04-30</text><text x="-13.75" y="7.1" font-size="7.6" textLength="27.5" lengthAdjust="spacingAndGlyphs" fill="#8c1848" stroke="#8c1848" stroke-width="0.18">15:30:07</text></g><g transform="translate(830.9,421.7) rotate(240) translate(-1.3,-332.9)"><text x="-13.9" y="-1.0" font-size="7.6" textLength="27.8" lengthAdjust="spacingAndGlyphs" fill="#8c1848" stroke="#8c1848" stroke-width="0.18">21-04-30</text><text x="-13.75" y="7.1" font-size="7.6" textLength="27.5" lengthAdjust="spacingAndGlyphs" fill="#8c1848" stroke="#8c1848" stroke-width="0.18">15:35:07</text></g><g transform="translate(830.9,421.7) rotate(270) translate(-1.3,-332.9)"><text x="-13.9" y="-1.0" font-size="7.6" textLength="27.8" lengthAdjust="spacingAndGlyphs" fill="#8c1848" stroke="#8c1848" stroke-width="0.18">21-04-30</text><text x="-13.75" y="7.1" font-size="7.6" textLength="27.5" lengthAdjust="spacingAndGlyphs" fill="#8c1848" stroke="#8c1848" stroke-width="0.18">15:40:07</text></g><g transform="translate(830.9,421.7) rotate(300) translate(-1.3,-332.9)"><text x="-13.9" y="-1.0" font-size="7.6" textLength="27.8" lengthAdjust="spacingAndGlyphs" fill="#8c1848" stroke="#8c1848" stroke-width="0.18">21-04-30</text><text x="-13.75" y="7.1" font-size="7.6" textLength="27.5" lengthAdjust="spacingAndGlyphs" fill="#8c1848" stroke="#8c1848" stroke-width="0.18">15:45:07</text></g><g transform="translate(830.9,421.7) rotate(330) translate(-1.3,-332.9)"><text x="-13.9" y="-1.0" font-size="7.6" textLength="27.8" lengthAdjust="spacingAndGlyphs" fill="#8c1848" stroke="#8c1848" stroke-width="0.18">21-04-30</text><text x="-13.75" y="7.1" font-size="7.6" textLength="27.5" lengthAdjust="spacingAndGlyphs" fill="#8c1848" stroke="#8c1848" stroke-width="0.18">15:50:07</text></g></svg>
<div class="abs" style="left:184.0px;top:64.2px;width:70.5px;height:36.3px;background:#fff;border:1px solid #5a5a5a;border-radius:1px;box-shadow:1px 1px 0.5px #9a9a9a"></div>
<div class="t" style="left:188.7px;top:67.6px;font-size:8.5px">21-04-30</div>
<div class="t" style="left:188.7px;top:78.7px;font-size:8.5px">15:25:07</div>
<div class="t" style="left:188.7px;top:89.3px;font-size:8.5px">通道01: 291.2</div>
</body></html>
